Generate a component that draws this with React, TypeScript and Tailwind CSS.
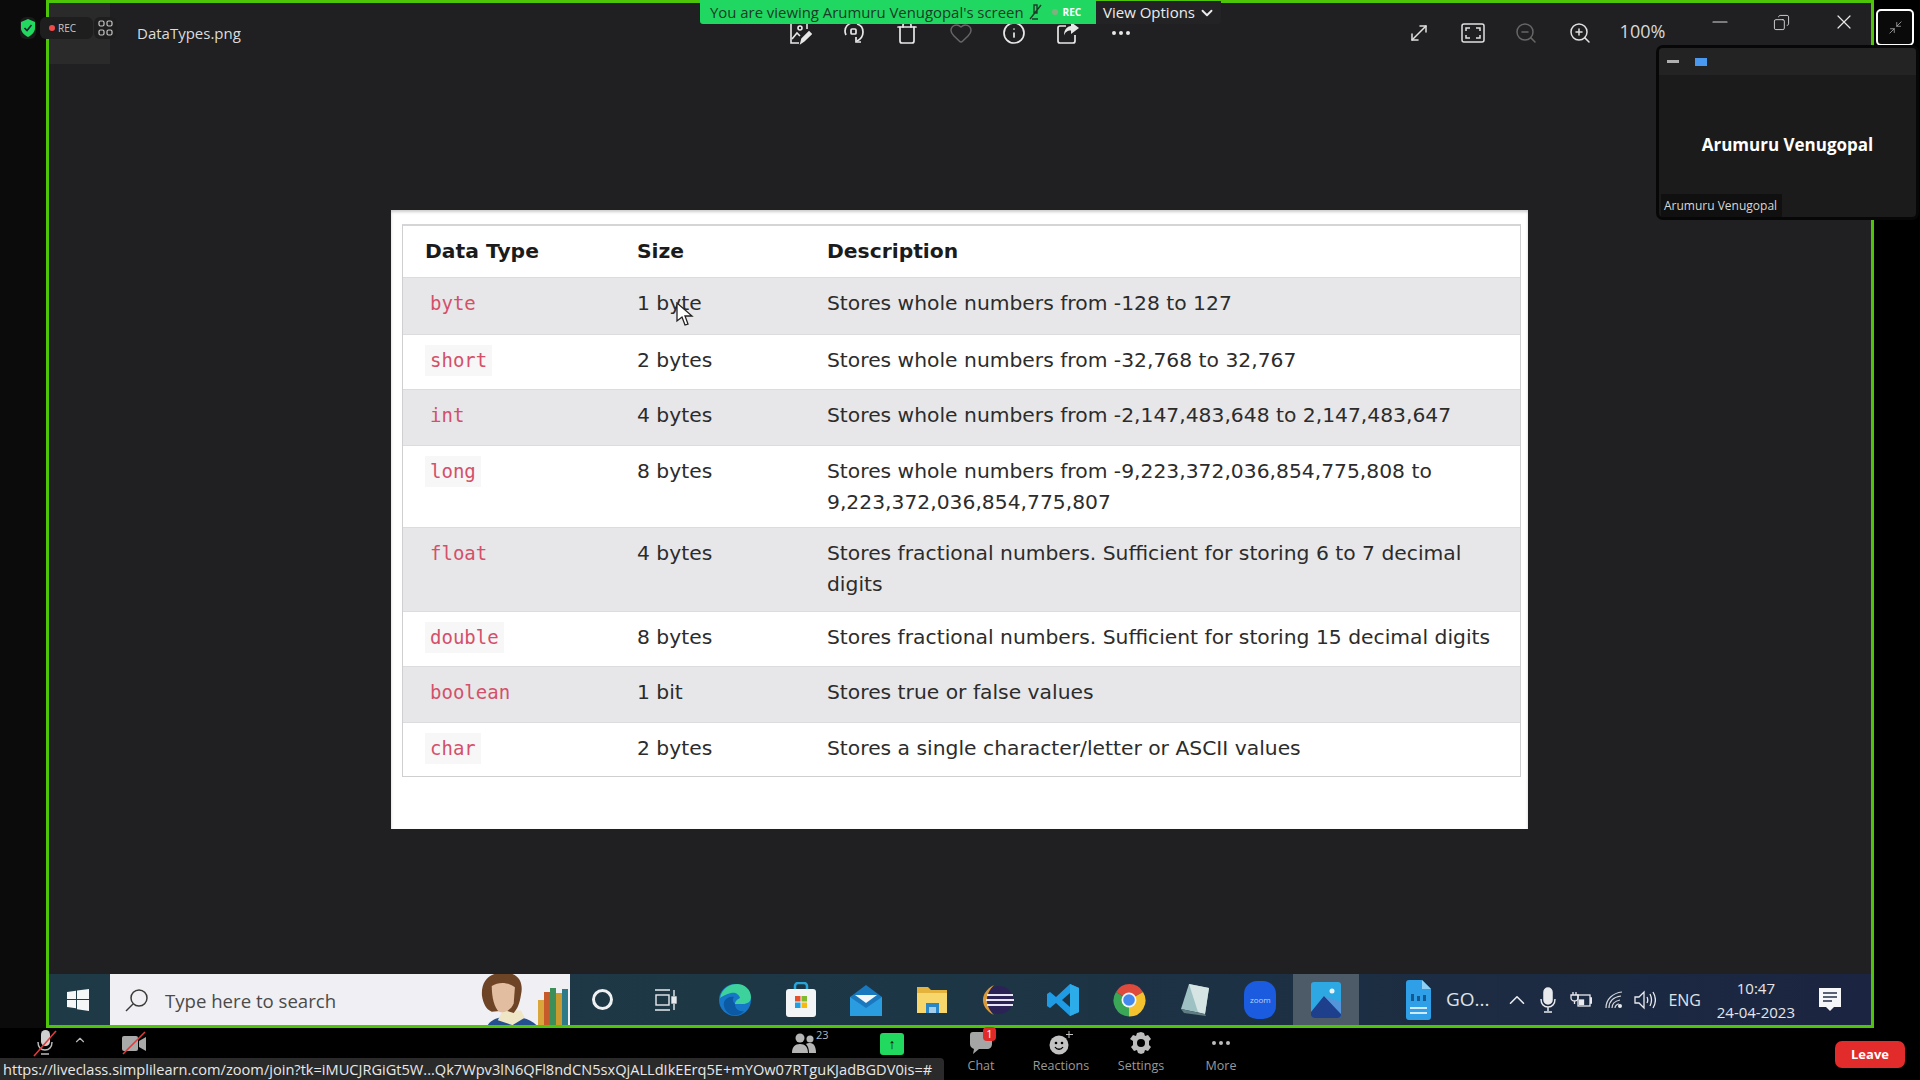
import React from "react"
import { ChevronDown, ChevronUp, Copy, Ellipsis, Heart, Info, Minimize2, Minus, MoveDiagonal, Trash, X, ZoomIn, ZoomOut } from "lucide-react"

const rows = [
    { code: "byte", size: "1 byte", desc: "Stores whole numbers from -128 to 127", h: "h-[57px]", bg: "bg-[#e7e7e9]", codeBg: "bg-transparent" },
    { code: "short", size: "2 bytes", desc: "Stores whole numbers from -32,768 to 32,767", h: "h-[55px]", bg: "bg-white", codeBg: "bg-[#f7f7f7]" },
    { code: "int", size: "4 bytes", desc: "Stores whole numbers from -2,147,483,648 to 2,147,483,647", h: "h-[56px]", bg: "bg-[#e7e7e9]", codeBg: "bg-transparent" },
    { code: "long", size: "8 bytes", desc: "Stores whole numbers from -9,223,372,036,854,775,808 to 9,223,372,036,854,775,807", h: "h-[82px]", bg: "bg-white", codeBg: "bg-[#f7f7f7]" },
    { code: "float", size: "4 bytes", desc: "Stores fractional numbers. Sufficient for storing 6 to 7 decimal digits", h: "h-[84px]", bg: "bg-[#e7e7e9]", codeBg: "bg-transparent" },
    { code: "double", size: "8 bytes", desc: "Stores fractional numbers. Sufficient for storing 15 decimal digits", h: "h-[55px]", bg: "bg-white", codeBg: "bg-[#f7f7f7]" },
    { code: "boolean", size: "1 bit", desc: "Stores true or false values", h: "h-[56px]", bg: "bg-[#e7e7e9]", codeBg: "bg-transparent" },
    { code: "char", size: "2 bytes", desc: "Stores a single character/letter or ASCII values", h: "h-[54px]", bg: "bg-white", codeBg: "bg-[#f7f7f7]" },
]

function TableRow({ row }: { row: (typeof rows)[number] }) {
    return (
        <div className={`grid grid-cols-[212px_190px_1fr] pt-[10px] border-t border-[#dcdcde] text-[20.3px] leading-[30.5px] text-[#2c2c2c] ${row.h} ${row.bg}`}>
            <div className="pl-[22px]">
                <span className={`inline-block px-[5px] text-[#d4506a] text-[19px] font-['DejaVu_Sans_Mono',monospace] ${row.codeBg}`}>{row.code}</span>
            </div>
            <div className="pl-[22px]">{row.size}</div>
            <div className="pl-[22px] pr-[18px]">{row.desc}</div>
        </div>
    )
}

function Slot({ children, w = "w-[65.7px]" }: { children: React.ReactNode; w?: string }) {
    return <div className={`h-full flex items-center justify-center shrink-0 ${w}`}>{children}</div>
}

function ToolItem({ label, children, w = "w-[80px]" }: { label?: string; children: React.ReactNode; w?: string }) {
    return (
        <div className={`flex flex-col items-center shrink-0 ${w}`}>
            <div className="h-[29px] flex items-center justify-center relative">{children}</div>
            {label && <span className="text-[12.5px] leading-[18px] text-[#9a9a9a]">{label}</span>}
        </div>
    )
}

const Shield = () => (
    <svg width="14" height="18" viewBox="0 0 14 18">
        <path d="M7 0l7 3v6c0 4-3 7-7 9-4-2-7-5-7-9V3z" fill="#22d95f" />
        <path d="M3.5 9l2.5 2.5L10.5 6" fill="none" stroke="#123" strokeWidth="1.6" />
    </svg>
)

const GridIcon = () => (
    <svg width="15" height="16" viewBox="0 0 15 16" fill="none" stroke="#c8c8c8" strokeWidth="1.2">
        <rect x="1" y="1" width="5" height="5" rx="1.5" />
        <rect x="9" y="1" width="5" height="5" rx="1.5" />
        <rect x="1" y="10" width="5" height="5" rx="1.5" />
        <rect x="9" y="10" width="5" height="5" rx="1.5" />
    </svg>
)

const EditImage = () => (
    <svg width="24" height="24" viewBox="0 0 24 24" fill="none" stroke="#e8e8e8" strokeWidth="1.6">
        <path d="M10 2H3v20h8M17 2h2v6" />
        <circle cx="12" cy="7" r="2" />
        <path d="M4 18l5-6 3 3" />
        <path d="M13 22l1-4 7-7 2 2-7 7z" fill="#e8e8e8" />
    </svg>
)

const RotateIcon = () => (
    <svg width="24" height="24" viewBox="0 0 24 24" fill="none" stroke="#e8e8e8" strokeWidth="1.7">
        <path d="M4 14a9 9 0 0 1-1-4c0-4 3-8 8-8" />
        <path d="M15 3c4 1 6 4 6 8 0 4-2 7-6 9" />
        <rect x="9" y="8" width="5" height="5" rx="1" />
        <path d="M19 21h-5v-5" />
    </svg>
)

const ShareIcon = () => (
    <svg width="24" height="24" viewBox="0 0 24 24" fill="none" stroke="#e8e8e8" strokeWidth="1.7">
        <path d="M10 5H4a2 2 0 0 0-2 2v13a2 2 0 0 0 2 2h13a2 2 0 0 0 2-2v-6" />
        <path d="M15 1l8 6-8 6V9.500c-4 0-6 2-7 5 0-6 3-9 7-9.500z" fill="#e8e8e8" stroke="none" />
    </svg>
)

const FitIcon = () => (
    <svg width="24" height="20" viewBox="0 0 24 20" fill="none" stroke="#e0e0e0" strokeWidth="1.5">
        <rect x="1" y="1" width="22" height="18" rx="2" />
        <path d="M5 8V5h4M15 5h4v3M19 12v3h-4M9 15H5v-3" />
    </svg>
)

const WindowsLogo = () => (
    <svg width="22" height="22" viewBox="0 0 22 22" fill="#f4f6f7">
        <path d="M0 3l9-1.3V10H0zM10 1.500L22 0v10H10zM0 11h9v8.300L0 18zM10 11h12v11l-12-1.700z" />
    </svg>
)

const Philosopher = () => (
    <svg width="90" height="51" viewBox="0 0 90 51" className="self-end shrink-0">
        <g transform="translate(-9 -5) scale(1.22)">
            <path d="M12 51c1-8 8-11 16-12l14 1c8 2 13 6 15 11z" fill="#24508f" />
            <path d="M22 42l12 4 10-6-3-6H26z" fill="#efe6c6" />
            <path d="M9 22C8 9 16 2 29 3c11 1 14 9 12 18-1 7-3 12-6 15l-7-2-11 1C12 33 10 28 9 22z" fill="#6d4426" />
            <path d="M17 14c6-4 14-3 19 1l-1 13c-2 5-7 9-12 7-4-3-6-12-6-21z" fill="#e3bda0" />
        </g>
        <rect x="58" y="26" width="6" height="25" fill="#d8a63a" />
        <rect x="64" y="18" width="6" height="33" fill="#c75a2a" />
        <rect x="70" y="14" width="6" height="37" fill="#3d8f5a" />
        <rect x="76" y="19" width="6" height="32" fill="#c99a2f" />
        <rect x="82" y="15" width="6" height="36" fill="#2e7a88" />
    </svg>
)

const Edge = () => (
    <svg width="34" height="34" viewBox="0 0 34 34">
        <circle cx="17" cy="17" r="16" fill="#1676c7" />
        <path d="M2 15C4 5 12 1 19 1c8 0 14 6 14 13 0 5-4 7-8 7h-8c0-3 3-5 5-6-1-4-5-6-9-5-5 1-8 3-11 5z" fill="#3dd29c" />
        <path d="M17 21c0 5 4 8 9 7-3 4-8 5-12 4-6-2-9-8-8-13 2-4 6-6 10-5-2 2-1 5 1 7z" fill="#0c59a4" />
    </svg>
)

const Store = () => (
    <svg width="32" height="36" viewBox="0 0 32 36">
        <path d="M10 8V4a3 3 0 0 1 3-3h6a3 3 0 0 1 3 3v4" fill="none" stroke="#28a5d8" strokeWidth="2.500" />
        <rect x="1" y="7" width="30" height="28" rx="3" fill="#f2f4f5" />
        <rect x="10" y="14" width="5.500" height="5.500" fill="#e6502a" />
        <rect x="16.500" y="14" width="5.500" height="5.500" fill="#7fba2c" />
        <rect x="10" y="20.500" width="5.500" height="5.500" fill="#1fa0e3" />
        <rect x="16.500" y="20.500" width="5.500" height="5.500" fill="#f5b90f" />
    </svg>
)

const Mail = () => (
    <svg width="34" height="32" viewBox="0 0 34 32">
        <path d="M1 13L17 1l16 12v19H1z" fill="#1a78bf" />
        <path d="M1 13l16 11 16-11v19H1z" fill="#2a9ce0" />
        <path d="M6 11h22l-11 8z" fill="#f4f6f8" />
    </svg>
)

const Folder = () => (
    <svg width="32" height="30" viewBox="0 0 32 30">
        <path d="M1 2h11l3 3h16v23H1z" fill="#e4b33e" />
        <rect x="1" y="8" width="30" height="20" fill="#f7d66c" />
        <rect x="10" y="18" width="13" height="10" fill="#2b86c8" />
        <rect x="13" y="22" width="7" height="6" fill="#a3cde8" />
    </svg>
)

const Eclipse = () => (
    <svg width="34" height="34" viewBox="0 0 34 34">
        <circle cx="18" cy="17" r="14" fill="#2b2356" />
        <path d="M13 2C5 6 2 12 2 17s3 11 11 15C8 27 6 22 6 17s2-10 7-15z" fill="#d99a3c" />
        <path d="M6 12h26M5 17h28M6 22h26" stroke="#e8e6f2" strokeWidth="2.200" />
    </svg>
)

const VSCode = () => (
    <svg width="34" height="34" viewBox="0 0 34 34">
        <path d="M24 1l9 4v24l-9 4-14-13-6 5-3-2V11l3-2 6 5zM24 10l-8 7 8 7z" fill="#1f9be6" />
        <path d="M24 1l9 4v24l-9 4z" fill="#2cace9" />
    </svg>
)

const Chrome = () => (
    <svg width="34" height="34" viewBox="0 0 34 34">
        <path d="M17 17L4 9A15.500 15.500 0 0 1 31 9z" fill="#de4a3c" />
        <path d="M17 17L31 9a16 16 0 0 1-14 24.500z" fill="#f3c22e" />
        <path d="M17 17v16.500A16 16 0 0 1 4 9z" fill="#3aa757" />
        <circle cx="17" cy="17" r="7.500" fill="#f3f5f7" />
        <circle cx="17" cy="17" r="5.800" fill="#4489ee" />
    </svg>
)

const Notes = () => (
    <svg width="30" height="34" viewBox="0 0 30 34">
        <path d="M9 1l20 4-4 26-24-5z" fill="#9ec2c4" />
        <path d="M9 1l20 4-4 26-7-2z" fill="#d6e4e3" />
        <path d="M1 26l24 5 1 2-22-3z" fill="#5f7d82" />
    </svg>
)

const ZoomApp = () => (
    <div className="w-[32px] h-[38px] rounded-[13px] bg-[#1a5be0] flex items-center justify-center text-[8px] text-[#bcd2f8]">zoom</div>
)

const Photos = () => (
    <svg width="30" height="36" viewBox="0 0 30 36">
        <rect width="30" height="36" rx="3" fill="#2ea8e3" />
        <circle cx="21" cy="9" r="2.500" fill="#e9f5fc" />
        <path d="M0 30l13-16 17 18v1a3 3 0 0 1-3 3H3a3 3 0 0 1-3-3z" fill="#1d3f8c" />
        <path d="M13 14l17 18V20z" fill="#7a7fd0" opacity=".5" />
    </svg>
)

const DocFile = () => (
    <svg width="25" height="40" viewBox="0 0 25 40">
        <path d="M3 0h13l9 9v28a3 3 0 0 1-3 3H3a3 3 0 0 1-3-3V3a3 3 0 0 1 3-3z" fill="#2f9fe8" />
        <path d="M16 0l9 9h-9z" fill="#8fd0f5" />
        <rect x="5" y="14" width="3" height="7" fill="#14598f" />
        <rect x="11" y="16" width="3" height="5" fill="#14598f" />
        <rect x="17" y="15" width="3" height="6" fill="#14598f" />
        <rect x="4" y="27" width="17" height="2" fill="#cfeafc" />
        <rect x="4" y="32" width="17" height="2" fill="#cfeafc" />
    </svg>
)

const TrayMic = () => (
    <svg width="16" height="26" viewBox="0 0 16 26" fill="none" stroke="#e8eaee" strokeWidth="1.500">
        <rect x="4" y="1" width="8" height="16" rx="4" fill="#e8eaee" />
        <path d="M1 12c0 5 3 8 7 8s7-3 7-8M8 20v4M4 25h8" />
    </svg>
)

const TrayBattery = () => (
    <svg width="22" height="18" viewBox="0 0 22 18" fill="none" stroke="#e8eaee" strokeWidth="1.300">
        <rect x="8" y="4" width="12" height="11" />
        <path d="M20 7h2v5h-2" fill="#e8eaee" />
        <rect x="9.500" y="9" width="4" height="4.500" fill="#e8eaee" />
        <path d="M3 1v3M6 1v3M1 4h7v3c0 2-2 3-3.500 3S1 9 1 7zM4.500 10v3" />
    </svg>
)

const TrayWifi = () => (
    <svg width="18" height="18" viewBox="0 0 18 18" fill="none" stroke="#d5d8dd" strokeWidth="1.200">
        <path d="M1 17C1 8 8 2 17 1M4 17c0-7 5-11 12-12M7 17c0-4 3-7 8-8M10 17c0-2 2-4 4-4" />
        <circle cx="15" cy="15" r="2" fill="#e8eaee" stroke="none" />
    </svg>
)

const TrayVolume = () => (
    <svg width="22" height="20" viewBox="0 0 22 20" fill="none" stroke="#e8eaee" strokeWidth="1.300">
        <path d="M1 7h4l5-5v16l-5-5H1z" />
        <path d="M13 7c1 2 1 4 0 6M16 4c2 4 2 8 0 12M19 2c3 5 3 11 0 16" />
    </svg>
)

const Notification = () => (
    <svg width="22" height="24" viewBox="0 0 22 24">
        <path d="M0 0h22v19h-7l-4 4-4-4H0z" fill="#f5f7f9" />
        <path d="M4 5h14M4 9h14M4 13h9" stroke="#26324a" strokeWidth="1.400" />
    </svg>
)

const MutedMic = () => (
    <svg width="26" height="28" viewBox="0 0 26 28">
        <rect x="9" y="1" width="9" height="16" rx="4.500" fill="#cfcfcf" />
        <path d="M6 13c0 5 3 8 7 8s7-3 7-8M9 25h8" fill="none" stroke="#bbb" strokeWidth="1.500" />
        <path d="M2 27L24 2" stroke="#e03a3a" strokeWidth="1.600" />
    </svg>
)

const MutedCam = () => (
    <svg width="26" height="24" viewBox="0 0 26 24">
        <rect x="1" y="5" width="16" height="15" rx="2" fill="#a9a9a9" />
        <path d="M18 10l7-4v14l-7-4z" fill="#a9a9a9" />
        <path d="M2 23L24 1" stroke="#e03a3a" strokeWidth="1.600" />
    </svg>
)

const People = () => (
    <svg width="24" height="20" viewBox="0 0 24 20" fill="#b5b5b5">
        <circle cx="8" cy="5" r="4.500" />
        <circle cx="18" cy="6" r="3.500" />
        <path d="M0 20c0-6 3-9 8-9s8 3 8 9zM17 20c0-4-1-7-3-9 1-1 3-1 4-1 4 0 6 4 6 10z" />
    </svg>
)

const ChatBubble = () => (
    <svg width="22" height="24" viewBox="0 0 22 24">
        <path d="M3 1h16a3 3 0 0 1 3 3v9c0 3-2 5-5 5H9l-6 5 1-5c-2-1-4-2-4-5V4a3 3 0 0 1 3-3z" fill="#a5a5a5" />
    </svg>
)

const Smile = () => (
    <svg width="24" height="24" viewBox="0 0 24 24">
        <circle cx="10" cy="14" r="9.500" fill="#c2c2c2" />
        <circle cx="7" cy="12" r="1.300" fill="#000" />
        <circle cx="13" cy="12" r="1.300" fill="#000" />
        <path d="M6 16c2 3 6 3 8 0" fill="none" stroke="#000" strokeWidth="1.300" />
        <path d="M20 0v7M17 3.500h7" stroke="#c2c2c2" strokeWidth="1" />
    </svg>
)

const Gear = () => (
    <svg width="22" height="24" viewBox="0 0 22 24">
        <path d="M11 1l3 1 1 3 3-1 3 4-2 2v4l2 2-3 4-3-1-1 3-3 1-3-1-1-3-3 1-3-4 2-2v-4L0 8l3-4 3 1 1-3z" fill="#bdbdbd" />
        <circle cx="11" cy="12" r="4" fill="#000" />
    </svg>
)

const Pointer = () => (
    <svg width="18" height="25" viewBox="0 0 18 25" className="absolute left-[285px] top-[92px]">
        <path d="M1 1v18l5-4 3 8 3-1-3-8h7z" fill="#fff" stroke="#222" strokeWidth="1.300" />
    </svg>
)

export default function App() {
    return (
        <div className="relative w-[1920px] h-[1080px] overflow-hidden bg-black flex flex-col font-['Open_Sans',sans-serif]">
            <div className="flex h-[1028px] shrink-0">
                <div className="w-[46px] bg-[#0b0b0b] shrink-0" />
                <div className="w-[1828px] shrink-0 border-[3px] border-[#4fc50a] flex flex-col bg-[#202022]">
                    <div className="h-[61px] pb-[2px] flex items-center shrink-0">
                        <div className="w-[61px] h-[61px] self-start bg-[#2a2a2a] shrink-0" />
                        <div className="w-[678px] pl-[27px] pt-[1px] text-[15px] text-[#dcdcdc] shrink-0">DataTypes.png</div>
                        <div className="flex items-center gap-[29.5px] shrink-0">
                            <EditImage />
                            <RotateIcon />
                            <Trash size={24} strokeWidth={1.7} color="#e8e8e8" />
                            <Heart size={24} strokeWidth={1.5} color="#666" />
                            <Info size={24} strokeWidth={1.7} color="#e8e8e8" />
                            <ShareIcon />
                            <Ellipsis size={24} color="#e8e8e8" />
                        </div>
                        <div className="flex items-center gap-[29.5px] ml-[274px] shrink-0">
                            <MoveDiagonal size={24} strokeWidth={1.5} color="#e0e0e0" />
                            <FitIcon />
                            <ZoomOut size={24} strokeWidth={1.5} color="#666" />
                            <ZoomIn size={24} strokeWidth={1.5} color="#e0e0e0" />
                        </div>
                        <div className="ml-[19px] w-[64px] pb-[3px] text-center text-[18px] text-[#d8d8d8] shrink-0">100%</div>
                        <div className="flex items-center self-start pt-[7px] gap-[41.5px] ml-[33px] shrink-0">
                            <Minus size={24} strokeWidth={1.2} color="#d8d8d8" />
                            <Copy size={17} strokeWidth={1.3} color="#d8d8d8" className="-scale-x-100" />
                            <X size={24} strokeWidth={1.2} color="#e8e8e8" />
                        </div>
                    </div>

                    <div className="flex-1 pl-[342px] pt-[146px]">
                        <div className="relative w-[1137px] h-[619px] bg-white pt-[14px] pl-[11px] shadow-[inset_0_2px_3px_#ccc] font-['DejaVu_Sans',sans-serif]">
                            <div className="w-[1119px] border-x border-b border-[#cfcfd2] border-t-2 border-t-[#d5d5d8]">
                                <div className="h-[51px] grid grid-cols-[212px_190px_1fr] items-center text-[20.3px] font-bold text-[#1b1b1b]">
                                    <div className="pl-[22px]">Data Type</div>
                                    <div className="pl-[22px]">Size</div>
                                    <div className="pl-[22px]">Description</div>
                                </div>
                                {rows.map((row) => (
                                    <TableRow row={row} key={row.code} />
                                ))}
                            </div>
                            <Pointer />
                        </div>
                    </div>

                    <div className="h-[51px] shrink-0 flex items-center bg-gradient-to-r from-[#1f3a47] via-[#1d3645] to-[#1b2440]">
                        <Slot w="w-[61px] pr-[3px]"><WindowsLogo /></Slot>
                        <div className="w-[460px] h-full shrink-0 bg-[#f0eff3] flex items-center pl-[15px] overflow-hidden">
                            <svg width="24" height="24" viewBox="0 0 24 24" fill="none" stroke="#3a3a3a" strokeWidth="1.500" className="shrink-0">
                                <circle cx="14" cy="10" r="8" />
                                <path d="M8 16l-7 7" />
                            </svg>
                            <span className="ml-[16px] pt-[3px] text-[18.600px] text-[#4a4a4a] w-[315px] shrink-0">Type here to search</span>
                            <Philosopher />
                        </div>
                        <Slot w="w-[64px]">
                            <div className="w-[21px] h-[21px] rounded-full border-[3px] border-[#eef0f2]" />
                        </Slot>
                        <Slot w="w-[64px]">
                            <svg width="22" height="22" viewBox="0 0 22 22" fill="none" stroke="#e8eaee" strokeWidth="1.400">
                                <path d="M0 1h15M0 21h15" />
                                <rect x="1" y="6" width="13" height="10" />
                                <path d="M19 1v6M19 15v6" />
                                <rect x="17" y="8" width="4" height="6" fill="#e8eaee" />
                            </svg>
                        </Slot>
                        <div className="w-[4px] shrink-0" />
                        <Slot><Edge /></Slot>
                        <Slot><Store /></Slot>
                        <Slot><Mail /></Slot>
                        <Slot><Folder /></Slot>
                        <Slot><Eclipse /></Slot>
                        <Slot><VSCode /></Slot>
                        <Slot><Chrome /></Slot>
                        <Slot><Notes /></Slot>
                        <Slot><ZoomApp /></Slot>
                        <Slot><div className="w-full h-full bg-[#4d5a68] flex items-center justify-center"><Photos /></div></Slot>
                        <div className="ml-[47px] shrink-0"><DocFile /></div>
                        <span className="ml-[15px] w-[50px] shrink-0 text-[19px] text-[#dfe2e6]">GO...</span>
                        <ChevronUp size={26} strokeWidth={1.5} color="#e8eaee" className="ml-[8px] shrink-0" />
                        <div className="ml-[10px] shrink-0"><TrayMic /></div>
                        <div className="ml-[14px] shrink-0"><TrayBattery /></div>
                        <div className="ml-[13px] shrink-0"><TrayWifi /></div>
                        <div className="ml-[11px] shrink-0"><TrayVolume /></div>
                        <span className="ml-[12.500px] w-[36px] shrink-0 text-[16px] text-[#dfe2e6]">ENG</span>
                        <div className="ml-[10.500px] w-[82px] shrink-0 text-center text-[15px] leading-[24px] text-[#e4e6ea]">
                            <div>10:47</div>
                            <div>24-04-2023</div>
                        </div>
                        <div className="ml-[22px] shrink-0"><Notification /></div>
                    </div>
                </div>
                <div className="flex-1 bg-black" />
            </div>

            <div className="flex-1 flex items-start bg-black relative">
                <div className="ml-[32px] w-[26px] h-[29px] flex items-center shrink-0"><MutedMic /></div>
                <ChevronUp size={14} color="#bbb" className="ml-[15px] mt-[5px] shrink-0" />
                <div className="ml-[34px] h-[29px] flex items-center shrink-0"><MutedCam /></div>
                <div className="ml-[632px] shrink-0">
                    <ToolItem w="w-[50px]">
                        <People />
                        <span className="absolute left-[24px] top-[-1px] text-[11px] text-[#aeb8c4]">23</span>
                    </ToolItem>
                </div>
                <div className="ml-[51px] mt-[5px] w-[24px] h-[22px] rounded-[3px] bg-[#22d95f] shrink-0 flex items-center justify-center text-[14px] font-bold leading-none text-black">↑</div>
                <div className="ml-[37px] shrink-0">
                    <ToolItem label="Chat">
                        <ChatBubble />
                        <span className="absolute left-[13px] top-[-1px] w-[13px] h-[14px] rounded-[4px] bg-[#e02a2a] text-[11px] leading-[14px] text-center text-white">1</span>
                    </ToolItem>
                </div>
                <div className="shrink-0"><ToolItem label="Reactions"><Smile /></ToolItem></div>
                <div className="shrink-0"><ToolItem label="Settings"><Gear /></ToolItem></div>
                <div className="shrink-0">
                    <ToolItem label="More"><Ellipsis size={24} color="#bdbdbd" /></ToolItem>
                </div>
                <div className="ml-[574px] mt-[13px] w-[70px] h-[27px] rounded-[7px] bg-[#e22b2b] shrink-0 flex items-center justify-center text-[13px] font-bold text-white">Leave</div>
            </div>

            <div className="absolute left-0 bottom-0 w-[944px] h-[22px] bg-[#2a2a2a] rounded-tr-[4px] pl-[3px] text-[14.600px] leading-[23px] text-[#e8e8e8] whitespace-nowrap overflow-hidden">
                https://liveclass.simplilearn.com/zoom/join?tk=iMUCJRGiGt5W...Qk7Wpv3lN6QFl8ndCN5sxQjALLdIkEErq5E+mYOw07RTguKJadBGDV0is=#
            </div>

            <div className="absolute left-[700px] top-0 flex h-[24px]">
                <div className="w-[396px] bg-[#20d861] flex items-center pl-[10px] text-[14.900px] text-[#1c3a28] rounded-bl-[3px] whitespace-nowrap">
                    <span>You are viewing Arumuru Venugopal's screen</span>
                    <svg width="14" height="16" viewBox="0 0 14 16" className="ml-[4px]" fill="none" stroke="#1c3a28" strokeWidth="1.400">
                        <path d="M6 1h3v8H6zM2 15L13 1M4 15h6" />
                    </svg>
                    <span className="ml-[10px] w-[6px] h-[6px] rounded-full bg-[#7fb27f]" />
                    <span className="ml-[5px] text-[10px] font-bold text-white">REC</span>
                </div>
                <div className="w-[125px] h-[23px] mt-[1px] bg-[#232326] rounded-br-[3px] flex items-center pl-[7px] gap-[3px] text-[15px] text-[#ececec]">
                    View Options
                    <ChevronDown size={18} strokeWidth={2.5} color="#ececec" />
                </div>
            </div>

            <div className="absolute left-[20px] top-[17px] w-[16px] h-[22px] rounded-[6px] bg-[#1a1a1a] flex items-center justify-center"><Shield /></div>
            <div className="absolute left-[40px] top-[17px] w-[53px] h-[22px] rounded-[6px] bg-[#1e1e1e] flex items-center pl-[9px] gap-[3px] text-[10px] text-[#c8c8c8]">
                <span className="w-[6px] h-[6px] rounded-full bg-[#f04b4b]" />
                REC
            </div>
            <div className="absolute left-[94px] top-[17px] w-[23px] h-[22px] rounded-[6px] bg-[#1e1e1e] flex items-center justify-center"><GridIcon /></div>

            <div className="absolute left-[1876px] top-[9px] w-[38px] h-[37px] rounded-[5px] border-2 border-white bg-[#0a0a0a] flex items-center justify-center">
                <Minimize2 size={15} strokeWidth={1.2} color="#bbb" />
            </div>

            <div className="absolute left-[1656px] top-[45px] w-[263px] h-[175px] rounded-[7px] border-[3px] border-[#070707] bg-[#1b1b1b] flex flex-col overflow-hidden">
                <div className="h-[27px] bg-[#232323] flex items-center pl-[8px] gap-[16px] shrink-0">
                    <span className="w-[12px] h-[3px] bg-[#b0b0b0]" />
                    <span className="w-[12px] h-[8px] bg-[#4a98f0]" />
                </div>
                <div className="flex-1 flex items-center justify-center pt-[21px] text-[17px] font-bold text-white">Arumuru Venugopal</div>
                <div className="w-[121px] h-[23px] ml-[2px] bg-[#101010] pl-[3px] text-[12px] leading-[23px] text-[#d8d8d8] whitespace-nowrap">Arumuru Venugopal</div>
            </div>
        </div>
    )
}
